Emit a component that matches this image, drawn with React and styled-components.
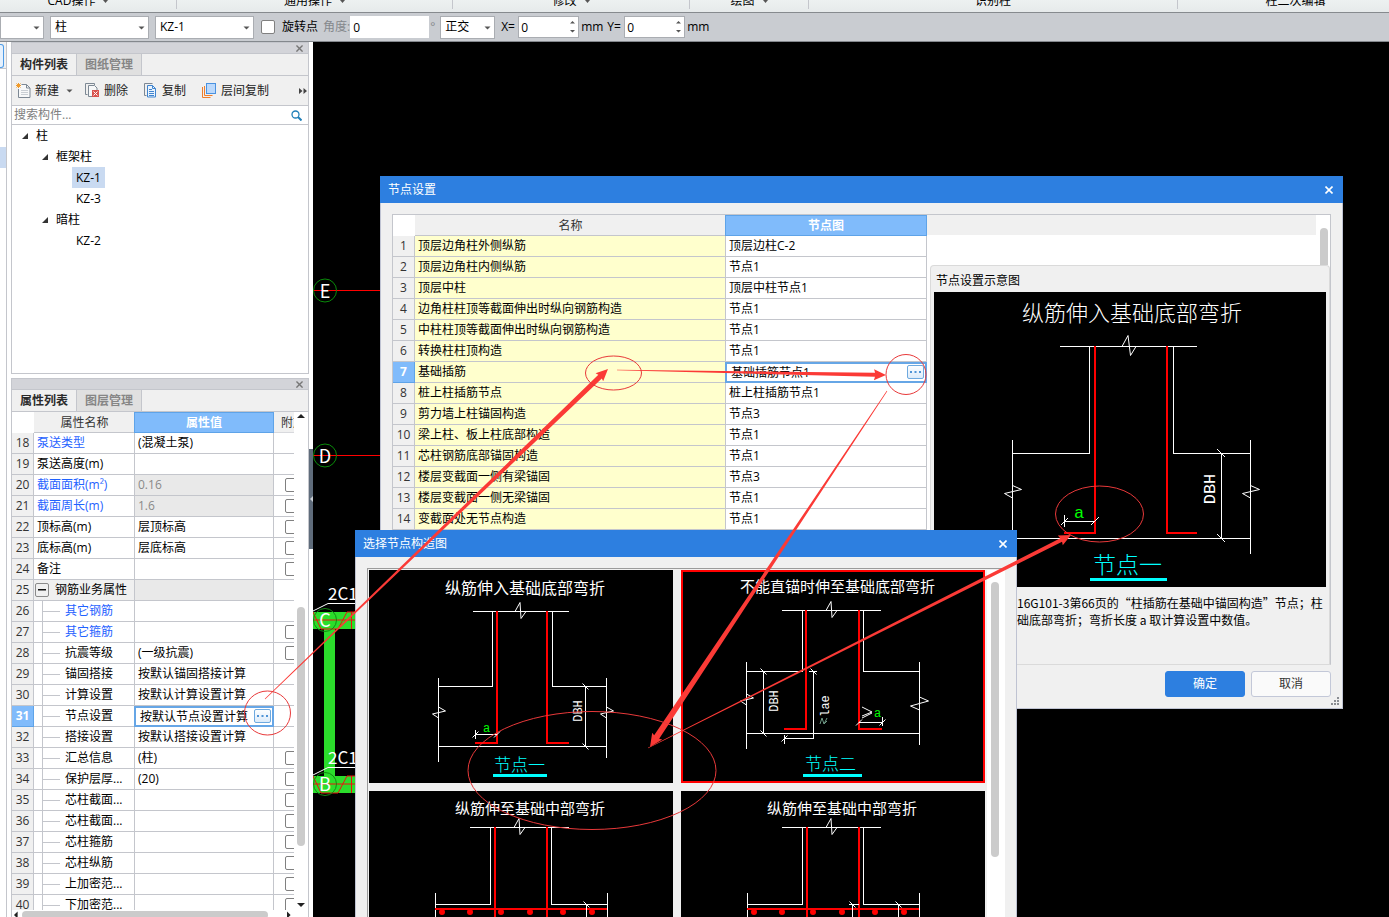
import React from 'react'
import styled, { createGlobalStyle, css } from 'styled-components'

const LINE = '#c4c6cc'
const BLUE = '#2d7fe0'
const SANS = '"Open Sans", "Noto Sans CJK SC", sans-serif'

const GlobalStyle = createGlobalStyle`
  * {
    box-sizing: border-box;
  }

  body {
    margin: 0;
    overflow: hidden;
    font-family: ${SANS};
    font-size: 12px;
    line-height: 20px;
    color: #000;
  }

  button, input, select {
    font: inherit;
    color: inherit;
    margin: 0;
    padding: 0;
  }
`;

const Page = styled.div`
  position: relative;
  display: flex;
  flex-direction: column;
  height: 100vh;
  overflow: hidden;
  background: #fff;
`;

/* ---------- ribbon ---------- */

const Ribbon = styled.div`
  display: flex;
  flex: none;
  height: 13px;
  overflow: hidden;
  background: linear-gradient(#edf1f1, #e6eaeb);
  border-bottom: 1px solid #868a8e;
`;

const RibbonGroup = styled.div`
  display: flex;
  flex: ${props => props.$size} 1 ${props => props.$size}px;
  align-items: flex-end;
  justify-content: center;
  gap: 8px;
  height: 9px;
  line-height: 16px;
  padding: ${props => props.$pad || '0'};
  border-right: 1px solid ${LINE};

  &:last-child {
    border-right: none;
  }
`;

const RibbonLabel = styled.span`
  white-space: nowrap;
  height: 16px;
`;

const RibbonArrow = styled.svg`
  width: 5px;
  height: 3px;
  margin-bottom: 6px;
`;

/* ---------- option bar ---------- */

const OptionBar = styled.div`
  display: flex;
  flex: none;
  align-items: center;
  height: 29px;
  background: #c9ccd1;
  border-bottom: 1px solid #84888d;
`;

const SelectBox = styled.div`
  position: relative;
  width: ${props => props.$width}px;
  height: 23px;
  margin-right: 6px;

  svg {
    position: absolute;
    right: 4px;
    top: 10px;
    pointer-events: none;
  }
`;

const Select = styled.select`
  appearance: none;
  width: 100%;
  height: 100%;
  padding: 0 4px;
  background: #fff;
  border: 1px solid #aaadb2;
  border-radius: 0;
`;

const CheckLabel = styled.label`
  display: flex;
  align-items: center;
  gap: 7px;
  margin-left: 1px;
`;

const Check = styled.input`
  appearance: none;
  width: 14px;
  height: 14px;
  background: #fff;
  border: 1px solid #808080;
  border-radius: 2px;
`;

const AngleLabel = styled.label`
  margin-left: 5px;
  color: #85888c;
`;

const AxisLabel = styled.label`
  width: 17px;
`;

const NumberBox = styled.div`
  position: relative;
  width: ${props => props.$width}px;
  height: 22px;

  svg {
    position: absolute;
    right: 3px;
    top: 4px;
  }
`;

const NumberInput = styled.input`
  width: 100%;
  height: 100%;
  padding: 0 2px;
  background: #fff;
  border: 1px solid ${props => (props.$flat ? '#fff' : '#aaadb2')};
  border-radius: 0;
`;

const Unit = styled.span`
  width: 28px;
  padding-left: 2px;
`;

const Degree = styled.span`
  width: 11px;
  padding-left: 1px;
  color: #85888c;
`;

/* ---------- docked panels ---------- */

const Main = styled.div`
  display: flex;
  flex: 1;
  min-height: 0;
`;

const Rail = styled.div`
  width: 11px;
  flex: none;
`;

const RailBody = styled.div`
  width: 7px;
  height: 100%;
  border-right: 1px solid ${LINE};
`;

const RailButton = styled.div`
  height: 27px;
  padding: 2px 2px 2px 0;
  background: #f0f0f0;
  border-bottom: 1px solid ${LINE};

  &::before {
    content: '';
    display: block;
    height: 22px;
    background: #e6f1fd;
    border: 1px solid #4e9be6;
    border-left: none;
    border-radius: 0 3px 3px 0;
  }
`;

const RailActive = styled.div`
  height: 21px;
  margin-top: 78px;
  background: #c9daf1;
`;

const Dock = styled.div`
  display: flex;
  flex-direction: column;
  flex: none;
  width: 298px;
`;

const Panel = styled.section`
  display: flex;
  flex-direction: column;
  flex: ${props => (props.$grow ? '1 1 0' : 'none')};
  min-height: 0;
  border: 1px solid ${LINE};
  border-bottom-width: ${props => (props.$grow ? '0' : '1px')};
  margin-bottom: ${props => (props.$grow ? '0' : '4px')};
  background: #fff;
`;

const PanelBar = styled.div`
  display: flex;
  align-items: center;
  justify-content: flex-end;
  flex: none;
  height: 11px;
  padding-right: 5px;
  background: #d3d4d9;
  border-bottom: 1px solid ${LINE};
`;

const PlainButton = styled.button`
  display: flex;
  align-items: center;
  background: none;
  border: none;
`;

const Tabs = styled.div`
  display: flex;
  flex: none;
  height: 22px;
  background: #f0f0f0;
  border-bottom: 1px solid ${LINE};
`;

const Tab = styled.button`
  width: 65px;
  height: 21px;
  line-height: 20px;
  font-weight: 700;
  border: none;
  border-right: 1px solid ${LINE};
  color: ${props => (props.$active ? '#2b2b2b' : '#868686')};
  background: ${props => (props.$active ? '#f0f0f0' : '#e0e0e0')};
`;

const Toolbar = styled.div`
  display: flex;
  align-items: center;
  flex: none;
  gap: 16px;
  height: 30px;
  padding: 0 1px 0 4px;
  background: #f0f0f0;
  border-bottom: 1px solid ${LINE};
`;

const ToolButton = styled(PlainButton)`
  gap: 4px;
  color: #222;
  white-space: nowrap;
`;

const ToolMenu = styled.span`
  display: flex;
  align-items: center;
  gap: 7px;
  margin-right: -4px;
`;

const More = styled(PlainButton)`
  margin-left: auto;
`;

const Search = styled.div`
  display: flex;
  align-items: center;
  flex: none;
  height: 19px;
  padding: 0 6px 0 2px;
  border-bottom: 1px solid ${LINE};

  input {
    flex: 1;
    min-width: 0;
    height: 18px;
    border: none;
    outline: none;
  }

  input::placeholder {
    color: #808080;
    opacity: 1;
  }
`;

const Tree = styled.ul`
  flex: none;
  height: 248px;
  margin: 0;
  padding: 0;
  list-style: none;
`;

const TreeItem = styled.li`
  display: flex;
  align-items: center;
  height: 21px;
  padding-left: ${props => 10 + props.$level * 20}px;
`;

const Twisty = styled.span`
  width: 10px;
  line-height: 0;
`;

const TreeName = styled.span`
  padding: 0 4px;
  line-height: 21px;
  background: ${props => (props.$selected ? '#c9daf1' : 'none')};
`;

const Splitter = styled.div`
  display: flex;
  flex-direction: column;
  flex: none;
  width: 4px;
  padding-top: 407px;
  background: #fff;
`;

const SplitterGrip = styled.div`
  display: flex;
  align-items: center;
  height: 100px;
  background: #5f6c7b;
`;

const Canvas = styled.div`
  flex: 1;
  min-width: 0;
  background: #000;
  overflow: hidden;
`;

/* ---------- tables ---------- */

const TableArea = styled.div`
  display: flex;
  flex: 1;
  min-height: 0;
  overflow: hidden;
`;

const Grid = styled.table`
  table-layout: fixed;
  border-collapse: separate;
  border-spacing: 0;
  width: ${props => props.$width}px;
  flex: none;
  align-self: flex-start;

  th, td {
    height: 21px;
    padding: 0 3px;
    line-height: 20px;
    text-align: left;
    font-weight: 400;
    white-space: nowrap;
    overflow: hidden;
    border-right: 1px solid ${LINE};
    border-bottom: 1px solid ${LINE};
  }

  thead th {
    height: 20px;
    line-height: 19px;
    padding: 0;
    text-align: center;
    color: #333;
    background: #f0f0f0;
    border-right: none;
  }

  thead th:first-child {
    background: #fff;
    border-color: #fff;
  }

  thead th:last-child {
    border-bottom-color: #d8d9dd;
  }
`;

const HeadActive = styled.th`
  && {
    color: #fff;
    font-weight: 700;
    background: #80bbfb !important;
    border: 1px solid #5ea3e8 !important;
    border-left: none !important;
    box-shadow: -1px 0 #5ea3e8;
  }
`;

const HeadExtra = styled.th`
  && {
    padding-left: 7px;
    text-align: left;
  }
`;

const RowNo = styled.th`
  && {
    padding: 0;
    text-align: center;
    color: #333;
    background: #f0f0f0;

    ${props => props.$active && css`
      color: #fff;
      font-weight: 700;
      background: #80bbfb;
      border-color: #5ea3e8;
    `}
  }
`;

const Name = styled.td`
  && {
    color: ${props => (props.$link ? '#1f62ff' : '#000')};
    background: ${props => props.$fill || '#fff'};
    ${props => props.$tree && 'padding: 0;'}
  }
`;

const Value = styled.td`
  && {
    color: ${props => (props.$muted ? '#8a8a8a' : '#000')};
    background: ${props => (props.$muted ? '#e9e9e9' : '#fff')};

    ${props => props.$active && css`
      padding: 0 1px 0 4px;
      border: 2px solid #66a6e6;
      border-left-width: 1px;
      box-shadow: -1px 0 #66a6e6;
    `}
  }
`;

const Extra = styled.td`
  && {
    padding: 0 0 0 11px;
    border-right: none;
  }

  input {
    display: block;
  }
`;

const Editor = styled.div`
  display: flex;
  align-items: center;
  justify-content: space-between;
  height: 17px;
`;

const DotsButton = styled.button`
  display: flex;
  align-items: center;
  justify-content: center;
  width: 17px;
  height: 14px;
  margin-bottom: 2px;
  border: 1px solid #6ea9df;
  border-radius: 2px;
  background: linear-gradient(#fdfeff, #dcebfa);
`;

const TreeCell = styled.div`
  display: flex;
  align-items: center;
  height: 20px;
`;

const Branch = styled.span`
  width: 18px;
  height: 21px;
  margin: 0 5px 0 8px;
  border-left: 1px solid ${LINE};
  background: linear-gradient(${LINE}, ${LINE}) 0 10px / 100% 1px no-repeat;
`;

const Fold = styled.button`
  display: flex;
  align-items: center;
  justify-content: center;
  width: 14px;
  height: 14px;
  margin: 0 6px 0 1px;
  border: 1px solid #8a8a8a;
  border-radius: 2px;
  background: #f0f0f0;
`;

const VScroll = styled.div`
  display: flex;
  flex-direction: column;
  align-items: center;
  flex: 1;
  padding: 1px 0 2px;

  svg {
    flex: none;
  }

  svg:last-child {
    margin-top: auto;
  }
`;

const ThumbBar = styled.div`
  flex: none;
  width: 8px;
  height: ${props => props.$size}px;
  margin-top: ${props => props.$offset}px;
  border-radius: ${props => (props.$open ? '4px 4px 0 0' : '4px')};
  background: #cbcbcb;
`;

const HScroll = styled.div`
  display: flex;
  align-items: flex-start;
  flex: none;
  height: 7px;
  padding: 1px 17px 0 2px;
  gap: 3px;
  overflow: hidden;
`;

const HThumb = styled.div`
  flex: none;
  width: 246px;
  height: 8px;
  margin-right: 16px;
  border-radius: 4px;
  background: #cbcbcb;
`;

/* ---------- windows ---------- */

const Window = styled.section`
  position: absolute;
  left: ${props => props.$x}px;
  top: ${props => props.$y}px;
  width: ${props => props.$width}px;
  background: #f0f0f0;
`;

const TitleBar = styled.header`
  display: flex;
  align-items: center;
  justify-content: space-between;
  height: 27px;
  padding: 0 10px 0 8px;
  color: #fff;
  background: ${BLUE};
`;

const WindowBody = styled.div`
  padding: ${props => props.$pad};
  border: 1px solid #bfc3d2;
  border-top: none;
`;

const Frame = styled.div`
  display: flex;
  border: 1px solid ${LINE};
  border-bottom-color: #dadada;
  background: #fff;
`;

const Side = styled.div`
  flex: 1;
  min-width: 0;
`;

const SideTop = styled.div`
  display: flex;
  height: 50px;
`;

const HeadFill = styled.div`
  flex: 1;
  height: 20px;
  background: #f0f0f0;
`;

const Track = styled.div`
  display: flex;
  justify-content: center;
  width: 14px;
  padding-left: 2px;
`;

const Preview = styled.div`
  height: 399px;
  margin-left: 3px;
  padding: 0 3px;
  background: #f0f0f0;
  border: 1px solid #dadada;
  border-bottom: none;
  border-radius: 4px 4px 0 0;

  svg {
    display: block;
    width: 100%;
  }
`;

const PreviewTitle = styled.div`
  height: 26px;
  padding: 5px 2px 0;
`;

const PreviewText = styled.p`
  margin: 7px 0 0;
  padding-left: 83px;
  font-family: "Noto Sans CJK SC", sans-serif;
  line-height: 17px;
  white-space: nowrap;
`;

const Actions = styled.div`
  display: flex;
  justify-content: flex-end;
  gap: 6px;
  height: 32px;
  padding-top: 6px;
`;

const Action = styled.button`
  width: 80px;
  height: 26px;
  border-radius: 3px;
  border: 1px solid ${props => (props.$primary ? BLUE : '#c3c8d8')};
  color: ${props => (props.$primary ? '#fff' : '#333')};
  background: ${props => (props.$primary ? BLUE : '#fafafa')};
`;

const Corner = styled.div`
  height: 11px;
  margin-right: -8px;
  line-height: 0;
  text-align: right;
`;

const Gallery = styled.div`
  display: flex;
  padding: 1px 0 0 1px;
  border: 1px solid #9b9b9b;
  border-right: none;
`;

const Thumbs = styled.div`
  display: grid;
  grid-template-columns: 1fr 1fr;
  gap: 8px;
  flex: 1;
`;

const Thumb = styled.button`
  display: block;
  border: none;
  background: #000;
  outline: ${props => (props.$selected ? '2px solid #f00' : 'none')};
  outline-offset: -2px;

  svg {
    display: block;
    width: 100%;
  }
`;

const GalleryScroll = styled.div`
  display: flex;
  justify-content: center;
  width: 18px;
  margin-left: 2px;
  padding-right: 2px;
  background: #fff;
`;

const Drawing = styled.svg`
  background: #000;
  fill: none;
  stroke: #fff;
  stroke-width: 1px;

  text {
    stroke: none;
    fill: #fff;
    font-family: "Noto Sans CJK SC", sans-serif;
    font-weight: ${props => (props.$large ? 300 : 400)};
  }

  .mono {
    font-family: "Liberation Mono", monospace;
    font-weight: 400;
  }

  .bar {
    stroke: #f00;
    stroke-width: 2px;
  }

  .green {
    fill: #0f0;
  }

  .cyan {
    fill: #0ff;
    font-weight: 300;
  }

  .underline {
    fill: #0ff;
    stroke: none;
  }
`;

const Notes = styled.svg`
  position: absolute;
  left: 0;
  top: 0;
  width: 1389px;
  height: 917px;
  pointer-events: none;
`;

/* ---------- small drawings ---------- */

const DownArrow = () => (
  <svg width="7" height="4" viewBox="0 0 7 4"><path d="M0.5 0.5h6L3.5 3.5z" fill="#555" /></svg>
)

const SpinArrows = () => (
  <svg width="7" height="14" viewBox="0 0 7 14">
    <path d="M1 3.5h5L3.5 1zM1 10h5L3.5 12.5z" fill="#555" />
  </svg>
)

const Cross = ({ size, color, width }) => (
  <svg width={size} height={size} viewBox="0 0 8 8">
    <path d="M0.5 0.5l7 7M7.5 0.5l-7 7" stroke={color} strokeWidth={width} />
  </svg>
)

const NewIcon = () => (
  <svg width="15" height="15" viewBox="0 0 15 15" fill="none">
    <path d="M5.5 1.5h5l3.5 3.5v9.5H2.5V6" fill="#f7f8f9" stroke="#7d8894" />
    <path d="M10.5 1.5v3.5H14" stroke="#7d8894" />
    <path d="M5 7.5h7M5 9.5h7M5 11.5h7" stroke="#c9ced4" />
    <path d="M0.5 0.5l4 4M4.5 0.5l-4 4M2.5 0v5M0 2.5h5" stroke="#f09a2a" />
  </svg>
)

const DeleteIcon = () => (
  <svg width="15" height="15" viewBox="0 0 15 15" fill="none">
    <path d="M2.5 11.5h-2v-11h9v1.5" stroke="#7d8894" />
    <path d="M7 13.5H3.5V2.5h6l2.5 2.5v2" fill="#f7f8f9" stroke="#7d8894" />
    <rect x="7" y="7" width="7" height="7" fill="#d9534f" />
    <path d="M8.5 8.5l4 4M12.5 8.5l-4 4" stroke="#fff" />
  </svg>
)

const CopyIcon = () => (
  <svg width="14" height="15" viewBox="0 0 14 15" fill="none">
    <path d="M2.5 12.5h-2v-12h8" stroke="#7d8894" />
    <path d="M3.5 2.5h5l3 3v8.500h-8z" fill="#eaf3fd" stroke="#3f84cf" />
    <path d="M8.5 2.5v3h3M5 6.500h3M5 8.500h5M5 10.500h5M5 12.500h5" stroke="#3f84cf" />
  </svg>
)

const LayerCopyIcon = () => (
  <svg width="15" height="15" viewBox="0 0 15 15" fill="none">
    <path d="M0.5 4v10.5h8M2.5 3v9.5h8" stroke="#ee7d2c" />
    <rect x="4.5" y="0.5" width="9" height="10" fill="#bcd9fb" stroke="#4a92e0" />
  </svg>
)

const SearchIcon = () => (
  <svg width="11" height="11" viewBox="0 0 11 11" fill="none" stroke="#1f7fb8">
    <circle cx="4.5" cy="4.5" r="3.5" strokeWidth="1.3" />
    <path d="M7 7l3.5 3.5" strokeWidth="2" />
  </svg>
)

const Expanded = () => (
  <svg width="6" height="6" viewBox="0 0 6 6"><path d="M6 0v6H0z" fill="#333" /></svg>
)

const Dots = () => (
  <svg width="11" height="2" viewBox="0 0 11 2">
    <path d="M0 0h2v2H0zM4.5 0h2v2h-2zM9 0h2v2H9z" fill="#4f94d6" />
  </svg>
)

const ScrollArrow = ({ d }) => (
  <svg width="8" height="6" viewBox="0 0 8 6"><path d={d} fill="#222" /></svg>
)

/* ---------- node diagrams ---------- */

const BreakTop = ({ x, y }) => (
  <path d={`M${x - 5} ${y}l5 -9l1 16l5 -7`} />
)

const BreakSide = ({ x, y }) => (
  <path d={`M${x} ${y + 5}l-6 -4l13 -3l-7 -4`} />
)

const Tick = ({ x, y, flip }) => (
  <path d={flip ? `M${x - 3} ${y + 3}l6 -6` : `M${x - 3} ${y - 3}l6 6`} />
)

const NodeOneLarge = () => (
  <Drawing viewBox="0 0 392 295" $large>
    <text x="88" y="29" fontSize="22">纵筋伸入基础底部弯折</text>
    <g shapeRendering="crispEdges">
      <path d="M126 54.5H263M155.5 54V161.5H78.5M239.5 54V161.5H316.5M78.5 148V262M316.5 148V262M78.5 246.5H316.5" />
      <path className="bar" d="M161 54V241H130M233 54V241H263" />
      <path d="M287.5 161V246M130.5 229.5H161M130.5 223V235" />
    </g>
    <path d="M188 54.5l6 -11l2.5 20l5.5 -9" />
    <path d="M78.5 206l-8 -4.5l17 -4l-9 -4M316.5 206l-8 -4.5l17 -4l-9 -4" />
    <path d="M283 157l8 8M283 242l8 8M127 233l7 -7M157 233l8 -8" />
    <text className="mono" fontSize="17" textAnchor="middle" transform="translate(281 197) rotate(-90)">DBH</text>
    <text className="mono green" x="140" y="226" fontSize="17">a</text>
    <text className="cyan" x="159" y="281" fontSize="23">节点一</text>
    <rect className="underline" x="156" y="286" width="77" height="3" />
  </Drawing>
)

const NodeOne = () => (
  <Drawing viewBox="0 0 304 213">
    <text x="76" y="24" fontSize="16">纵筋伸入基础底部弯折</text>
    <g shapeRendering="crispEdges">
      <path d="M104 41.5H200M123.5 41V116.5H69.5M183.5 41V116.5H237.5M69.5 108V192M237.5 108V188M69.5 176.5H237.5" />
      <path className="bar" d="M128 41V173H106M178 41V173H200" />
      <path d="M216.5 116V176M106.5 164.5H128M106.5 160V169" />
    </g>
    <BreakTop x={151} y={41.5} />
    <BreakSide x={69.5} y={143} />
    <BreakSide x={237.5} y={143} />
    <Tick x={216.5} y={116.5} />
    <Tick x={216.5} y={176.5} />
    <Tick x={106.5} y={164.5} flip />
    <Tick x={128} y={164.5} flip />
    <text className="mono" fontSize="12" textAnchor="middle" transform="translate(213 141) rotate(-90)">DBH</text>
    <text className="mono green" x="114" y="162" fontSize="12">a</text>
    <text className="cyan" x="125" y="201" fontSize="17">节点一</text>
    <rect className="underline" x="124" y="204" width="54" height="3" />
  </Drawing>
)

const NodeTwo = () => (
  <Drawing viewBox="0 0 304 213">
    <text x="59" y="22" fontSize="15">不能直锚时伸至基础底部弯折</text>
    <g shapeRendering="crispEdges">
      <path d="M101 40.5H200M121.5 40V101.5H65.5M182.5 40V101.5H238.5M65.5 92V179M238.5 92V175M65.5 163.5H238.5" />
      <path className="bar" d="M125 40V159H103M178 40V159H201" />
      <path d="M82.5 101V163M128 101.5H136M132.5 101V168.5H103.5M103.5 165V174M178 152.5H201.5M201.5 147V156" />
    </g>
    <BreakTop x={150} y={40.5} />
    <BreakSide x={65.5} y={130} />
    <path d="M238.5 140l-9 -4l18 -5l-9 -4" />
    <Tick x={82.5} y={101.5} />
    <Tick x={82.5} y={163.5} />
    <Tick x={132.5} y={101.5} />
    <Tick x={103.5} y={168.5} flip />
    <Tick x={178} y={152.5} flip />
    <Tick x={201.5} y={152.5} flip />
    <text className="mono" fontSize="12" textAnchor="middle" transform="translate(97 131) rotate(-90)">DBH</text>
    <text className="mono" fontSize="12" textAnchor="middle" transform="translate(148 136) rotate(-90)">lae</text>
    <path d="M139 154l2 -6l2 6l3 -6M143 154l3 -3" stroke="#6f9a86" />
    <path d="M181 137l10 5l-10 4M181 148l10 -5" />
    <text className="mono green" x="193" y="147" fontSize="12">a</text>
    <text className="cyan" x="124" y="200" fontSize="17">节点二</text>
    <rect className="underline" x="122" y="204" width="59" height="3" />
  </Drawing>
)

const NodeMiddle = ({ lap }) => (
  <Drawing viewBox="0 0 304 213">
    <text x="86" y="23" fontSize="15">纵筋伸至基础中部弯折</text>
    <g shapeRendering="crispEdges">
      <path d="M101 36.5H200M121.5 36V113.5H66.5M182.5 36V113.5H238.5M66.5 102V186M238.5 102V186" />
      <path className="bar" d="M126 36V150M178 36V150M66 118H238" />
      <path d="M217.5 113V180" />
      {lap && <path d="M171.5 113V180M168 113.5H178" />}
    </g>
    <BreakTop x={150} y={36.5} />
    <Tick x={217.5} y={113.5} />
    {lap && <Tick x={171.5} y={113.5} />}
    {[73, 101, 132, 161, 194, 223].map(x => (
      <circle key={x} cx={x} cy="121" r="3" fill="#f00" stroke="none" />
    ))}
  </Drawing>
)

/* ---------- model view ---------- */

const Beam = ({ y, label }) => (
  <g>
    <rect x="0" y={y} width="76" height="17" fill="#2bdd2b" />
    <path d={`M0 ${y}l8 17h17l9 -17h42M0 ${y + 8}h76M38.5 ${y}v17`} stroke="#e11" fill="none" />
    <path d={`M0 ${y - 1}l15 -7.5h61`} stroke="#fff" fill="none" />
    <text x="15" y={y - 12} fontSize="17" fill="#fff">2C1</text>
    <Axis y={y + 8} label={label} dark />
  </g>
)

const Axis = ({ y, label, dark }) => (
  <g>
    {!dark && <path d={`M0 ${y}h120`} stroke="#f00" />}
    <circle cx="12" cy={y} r="11.5" fill="none" stroke={dark ? '#138a13' : '#0a8a0a'} />
    <text x="12" y={y + 7} fontSize="18" fill="#fff" textAnchor="middle">{label}</text>
  </g>
)

const Model = () => (
  <svg width="200" height="875" viewBox="0 0 200 875" fontFamily="Noto Sans CJK SC, sans-serif">
    <Axis y={248.5} label="E" />
    <Axis y={413.5} label="D" />
    <rect x="11" y="586" width="11" height="150" fill="#2bdd2b" />
    <Beam y={570} label="C" />
    <Beam y={734} label="B" />
  </svg>
)

/* ---------- data ---------- */

const ribbonGroups = [
  { label: 'CAD操作', size: 177, arrow: true, pad: '0 20px 0 0' },
  { label: '通用操作', size: 276, arrow: true },
  { label: '修改', size: 237, arrow: true },
  { label: '绘图', size: 119, arrow: true },
  { label: '识别柱', size: 369 },
  { label: '柱二次编辑', size: 211, pad: '0 0 0 24px' },
]

const tree = [
  { name: '柱', level: 0, open: true },
  { name: '框架柱', level: 1, open: true },
  { name: 'KZ-1', level: 2, selected: true },
  { name: 'KZ-3', level: 2 },
  { name: '暗柱', level: 1, open: true },
  { name: 'KZ-2', level: 2 },
]

const properties = [
  { no: 18, name: '泵送类型', value: '(混凝土泵)', link: true },
  { no: 19, name: '泵送高度(m)' },
  { no: 20, name: '截面面积(m²)', value: '0.16', link: true, muted: true, check: true },
  { no: 21, name: '截面周长(m)', value: '1.6', link: true, muted: true, check: true },
  { no: 22, name: '顶标高(m)', value: '层顶标高', check: true },
  { no: 23, name: '底标高(m)', value: '层底标高', check: true },
  { no: 24, name: '备注', check: true },
  { no: 25, name: '钢筋业务属性', group: true, muted: true },
  { no: 26, name: '其它钢筋', child: true, link: true },
  { no: 27, name: '其它箍筋', child: true, link: true, check: true },
  { no: 28, name: '抗震等级', value: '(一级抗震)', child: true, check: true },
  { no: 29, name: '锚固搭接', value: '按默认锚固搭接计算', child: true },
  { no: 30, name: '计算设置', value: '按默认计算设置计算', child: true },
  { no: 31, name: '节点设置', value: '按默认节点设置计算', child: true, active: true },
  { no: 32, name: '搭接设置', value: '按默认搭接设置计算', child: true },
  { no: 33, name: '汇总信息', value: '(柱)', child: true, check: true },
  { no: 34, name: '保护层厚...', value: '(20)', child: true, check: true },
  { no: 35, name: '芯柱截面...', child: true, check: true },
  { no: 36, name: '芯柱截面...', child: true, check: true },
  { no: 37, name: '芯柱箍筋', child: true, check: true },
  { no: 38, name: '芯柱纵筋', child: true, check: true },
  { no: 39, name: '上加密范...', child: true, check: true },
  { no: 40, name: '下加密范...', child: true, check: true },
]

const nodes = [
  ['顶层边角柱外侧纵筋', '顶层边柱C-2'],
  ['顶层边角柱内侧纵筋', '节点1'],
  ['顶层中柱', '顶层中柱节点1'],
  ['边角柱柱顶等截面伸出时纵向钢筋构造', '节点1'],
  ['中柱柱顶等截面伸出时纵向钢筋构造', '节点1'],
  ['转换柱柱顶构造', '节点1'],
  ['基础插筋', '基础插筋节点1'],
  ['桩上柱插筋节点', '桩上柱插筋节点1'],
  ['剪力墙上柱锚固构造', '节点3'],
  ['梁上柱、板上柱底部构造', '节点1'],
  ['芯柱钢筋底部锚固构造', '节点1'],
  ['楼层变截面一侧有梁锚固', '节点3'],
  ['楼层变截面一侧无梁锚固', '节点1'],
  ['变截面处无节点构造', '节点1'],
]

/* ---------- sections ---------- */

const Combo = ({ label, value, width }) => (
  <SelectBox $width={width}>
    <Select aria-label={label} defaultValue={value}>
      <option>{value}</option>
    </Select>
    <DownArrow />
  </SelectBox>
)

const Options = () => (
  <OptionBar>
    <Combo label="楼层" value="" width={44} />
    <Combo label="构件类型" value="柱" width={99} />
    <Combo label="构件" value="KZ-1" width={99} />
    <CheckLabel><Check type="checkbox" />旋转点</CheckLabel>
    <AngleLabel htmlFor="angle">角度:</AngleLabel>
    <NumberBox $width={79}>
      <NumberInput id="angle" defaultValue="0" $flat />
    </NumberBox>
    <Degree>°</Degree>
    <Combo label="正交" value="正交" width={55} />
    <AxisLabel htmlFor="offset-x">X=</AxisLabel>
    <NumberBox $width={61}><NumberInput id="offset-x" defaultValue="0" /><SpinArrows /></NumberBox>
    <Unit>mm</Unit>
    <AxisLabel htmlFor="offset-y">Y=</AxisLabel>
    <NumberBox $width={61}><NumberInput id="offset-y" defaultValue="0" /><SpinArrows /></NumberBox>
    <Unit>mm</Unit>
  </OptionBar>
)

const PanelHead = ({ tabs }) => (
  <>
    <PanelBar>
      <PlainButton aria-label="关闭"><Cross size={7} color="#777" width={1.6} /></PlainButton>
    </PanelBar>
    <Tabs>
      {tabs.map((tab, i) => <Tab key={tab} $active={i === 0}>{tab}</Tab>)}
    </Tabs>
  </>
)

const ComponentPanel = () => (
  <Panel>
    <PanelHead tabs={['构件列表', '图纸管理']} />
    <Toolbar>
      <ToolButton><NewIcon /><ToolMenu>新建<DownArrow /></ToolMenu></ToolButton>
      <ToolButton><DeleteIcon />删除</ToolButton>
      <ToolButton><CopyIcon />复制</ToolButton>
      <ToolButton><LayerCopyIcon />层间复制</ToolButton>
      <More aria-label="更多">
        <svg width="8" height="6" viewBox="0 0 8 6"><path d="M0 0l3.5 3L0 6zM4.5 0L8 3L4.5 6z" fill="#444" /></svg>
      </More>
    </Toolbar>
    <Search>
      <input aria-label="搜索构件" placeholder="搜索构件..." />
      <SearchIcon />
    </Search>
    <Tree>
      {tree.map(item => (
        <TreeItem key={item.name} $level={item.level}>
          <Twisty>{item.open && <Expanded />}</Twisty>
          <TreeName $selected={item.selected}>{item.name}</TreeName>
        </TreeItem>
      ))}
    </Tree>
  </Panel>
)

const PropertyRow = ({ row }) => (
  <tr>
    <RowNo scope="row" $active={row.active}>{row.no}</RowNo>
    <Name $link={row.link} $tree={row.child || row.group} $fill={row.group ? '#f0f0f0' : '#fff'}>
      {row.child && <TreeCell><Branch />{row.name}</TreeCell>}
      {row.group && (
        <TreeCell>
          <Fold aria-label="折叠">
            <svg width="8" height="2" viewBox="0 0 8 2"><path d="M0 0h8v1.5H0z" fill="#111" /></svg>
          </Fold>
          {row.name}
        </TreeCell>
      )}
      {!row.child && !row.group && row.name}
    </Name>
    <Value $muted={row.muted} $active={row.active}>
      {row.active
        ? <Editor>{row.value}<DotsButton aria-label="选择"><Dots /></DotsButton></Editor>
        : row.value}
    </Value>
    <Extra>{row.check && <Check type="checkbox" aria-label={row.name} />}</Extra>
  </tr>
)

const PropertyPanel = () => (
  <Panel $grow>
    <PanelHead tabs={['属性列表', '图层管理']} />
    <TableArea>
      <Grid $width={282}>
        <colgroup>
          <col width="22" /><col width="101" /><col width="139" /><col width="20" />
        </colgroup>
        <thead>
          <tr><th /><th>属性名称</th><HeadActive>属性值</HeadActive><HeadExtra>附加</HeadExtra></tr>
        </thead>
        <tbody>
          {properties.map(row => <PropertyRow key={row.no} row={row} />)}
        </tbody>
      </Grid>
      <VScroll>
        <ScrollArrow d="M0 5h8L4 1z" />
        <ThumbBar $offset={188} $size={239} />
        <ScrollArrow d="M0 1h8L4 5z" />
      </VScroll>
    </TableArea>
    <HScroll>
      <svg width="5" height="8" viewBox="0 0 5 8"><path d="M4 0v8L0 4z" fill="#222" /></svg>
      <HThumb />
      <svg width="5" height="8" viewBox="0 0 5 8"><path d="M0 0v8l4 -4z" fill="#222" /></svg>
    </HScroll>
  </Panel>
)

const WindowTitle = ({ children }) => (
  <TitleBar>
    {children}
    <PlainButton aria-label="关闭"><Cross size={8} color="#fff" width={1.6} /></PlainButton>
  </TitleBar>
)

const NodeSettings = () => (
  <Window $x={380} $y={176} $width={963}>
    <WindowTitle>节点设置</WindowTitle>
    <WindowBody $pad="11px 11px 0">
      <Frame>
        <Grid $width={534}>
          <colgroup>
            <col width="22" /><col width="311" /><col width="201" />
          </colgroup>
          <thead>
            <tr><th /><th>名称</th><HeadActive>节点图</HeadActive></tr>
          </thead>
          <tbody>
            {nodes.map(([name, value], i) => {
              const active = i === 6
              return (
                <tr key={name}>
                  <RowNo scope="row" $active={active}>{i + 1}</RowNo>
                  <Name $fill="#ffffcd">{name}</Name>
                  <Value $active={active}>
                    {active
                      ? <Editor>{value}<DotsButton aria-label="选择"><Dots /></DotsButton></Editor>
                      : value}
                  </Value>
                </tr>
              )
            })}
          </tbody>
        </Grid>
        <Side>
          <SideTop>
            <HeadFill />
            <Track><ThumbBar $offset={13} $size={37} $open /></Track>
          </SideTop>
          <Preview>
            <PreviewTitle>节点设置示意图</PreviewTitle>
            <NodeOneLarge />
            <PreviewText>
              16G101-3第66页的“柱插筋在基础中锚固构造”节点；柱<br />
              础底部弯折；弯折长度 a 取计算设置中数值。
            </PreviewText>
          </Preview>
        </Side>
      </Frame>
      <Actions>
        <Action $primary>确定</Action>
        <Action>取消</Action>
      </Actions>
      <Corner>
        <svg width="8" height="8" viewBox="0 0 8 8">
          <path d="M6 0h2v2H6zM3 3h2v2H3zM6 3h2v2H6zM0 6h2v2H0zM3 6h2v2H3zM6 6h2v2H6z" fill="#8a8d92" />
        </svg>
      </Corner>
    </WindowBody>
  </Window>
)

const NodePicker = () => (
  <Window $x={355} $y={530} $width={662}>
    <WindowTitle>选择节点构造图</WindowTitle>
    <WindowBody $pad="11px 11px 11px">
      <Gallery>
        <Thumbs>
          <Thumb aria-label="节点一"><NodeOne /></Thumb>
          <Thumb aria-label="节点二" $selected><NodeTwo /></Thumb>
          <Thumb aria-label="节点三"><NodeMiddle /></Thumb>
          <Thumb aria-label="节点四"><NodeMiddle lap /></Thumb>
        </Thumbs>
        <GalleryScroll><ThumbBar $offset={12} $size={275} /></GalleryScroll>
      </Gallery>
    </WindowBody>
  </Window>
)

// tapered arrow: thin at the tail, w wide where the head begins
const Arrow = ({ from, to, w, head }) => {
  const [x1, y1] = from
  const [x2, y2] = to
  const len = Math.hypot(x2 - x1, y2 - y1)
  const ux = (x2 - x1) / len
  const uy = (y2 - y1) / len
  const at = (along, side) => `${x1 + ux * along - uy * side},${y1 + uy * along + ux * side}`
  const neck = len - head
  return (
    <polygon
      fill="#fb3a36"
      points={[
        at(0, -0.3), at(neck, -w / 2), at(neck - 1, -head / 2), at(len, 0),
        at(neck - 1, head / 2), at(neck, w / 2), at(0, 0.3),
      ].join(' ')}
    />
  )
}

const Annotations = () => (
  <Notes viewBox="0 0 1389 917" aria-hidden="true">
    <Arrow from={[265, 699]} to={[608, 369]} w={5} head={11} />
    <Arrow from={[617, 370]} to={[886, 375]} w={4} head={11} />
    <Arrow from={[887, 391]} to={[650, 747]} w={6} head={12} />
    <Arrow from={[648, 748]} to={[1071, 535]} w={4} head={11} />
    <g fill="none" stroke="#e8393a">
      <ellipse cx="613.5" cy="373" rx="28" ry="17" />
      <ellipse cx="906" cy="374.5" rx="20" ry="20" />
      <ellipse cx="1099.5" cy="514" rx="44" ry="28" />
      <ellipse cx="267.5" cy="713" rx="23" ry="22" />
      <ellipse cx="592" cy="770.5" rx="124" ry="59" />
    </g>
  </Notes>
)

const App = () => {
  return (
    <Page>
      <GlobalStyle />
      <Ribbon>
        {ribbonGroups.map(group => (
          <RibbonGroup key={group.label} $size={group.size} $pad={group.pad}>
            <RibbonLabel>{group.label}</RibbonLabel>
            {group.arrow && <RibbonArrow viewBox="0 0 5 3"><path d="M0 0h5L2.5 3z" fill="#555" /></RibbonArrow>}
          </RibbonGroup>
        ))}
      </Ribbon>
      <Options />
      <Main>
        <Rail>
          <RailBody>
            <RailButton />
            <RailActive />
          </RailBody>
        </Rail>
        <Dock>
          <ComponentPanel />
          <PropertyPanel />
        </Dock>
        <Splitter>
          <SplitterGrip>
            <svg width="4" height="6" viewBox="0 0 4 6"><path d="M4 0v6L1 3z" fill="#c9ced4" /></svg>
          </SplitterGrip>
        </Splitter>
        <Canvas><Model /></Canvas>
      </Main>
      <NodeSettings />
      <NodePicker />
      <Annotations />
    </Page>
  );
}

export default App
